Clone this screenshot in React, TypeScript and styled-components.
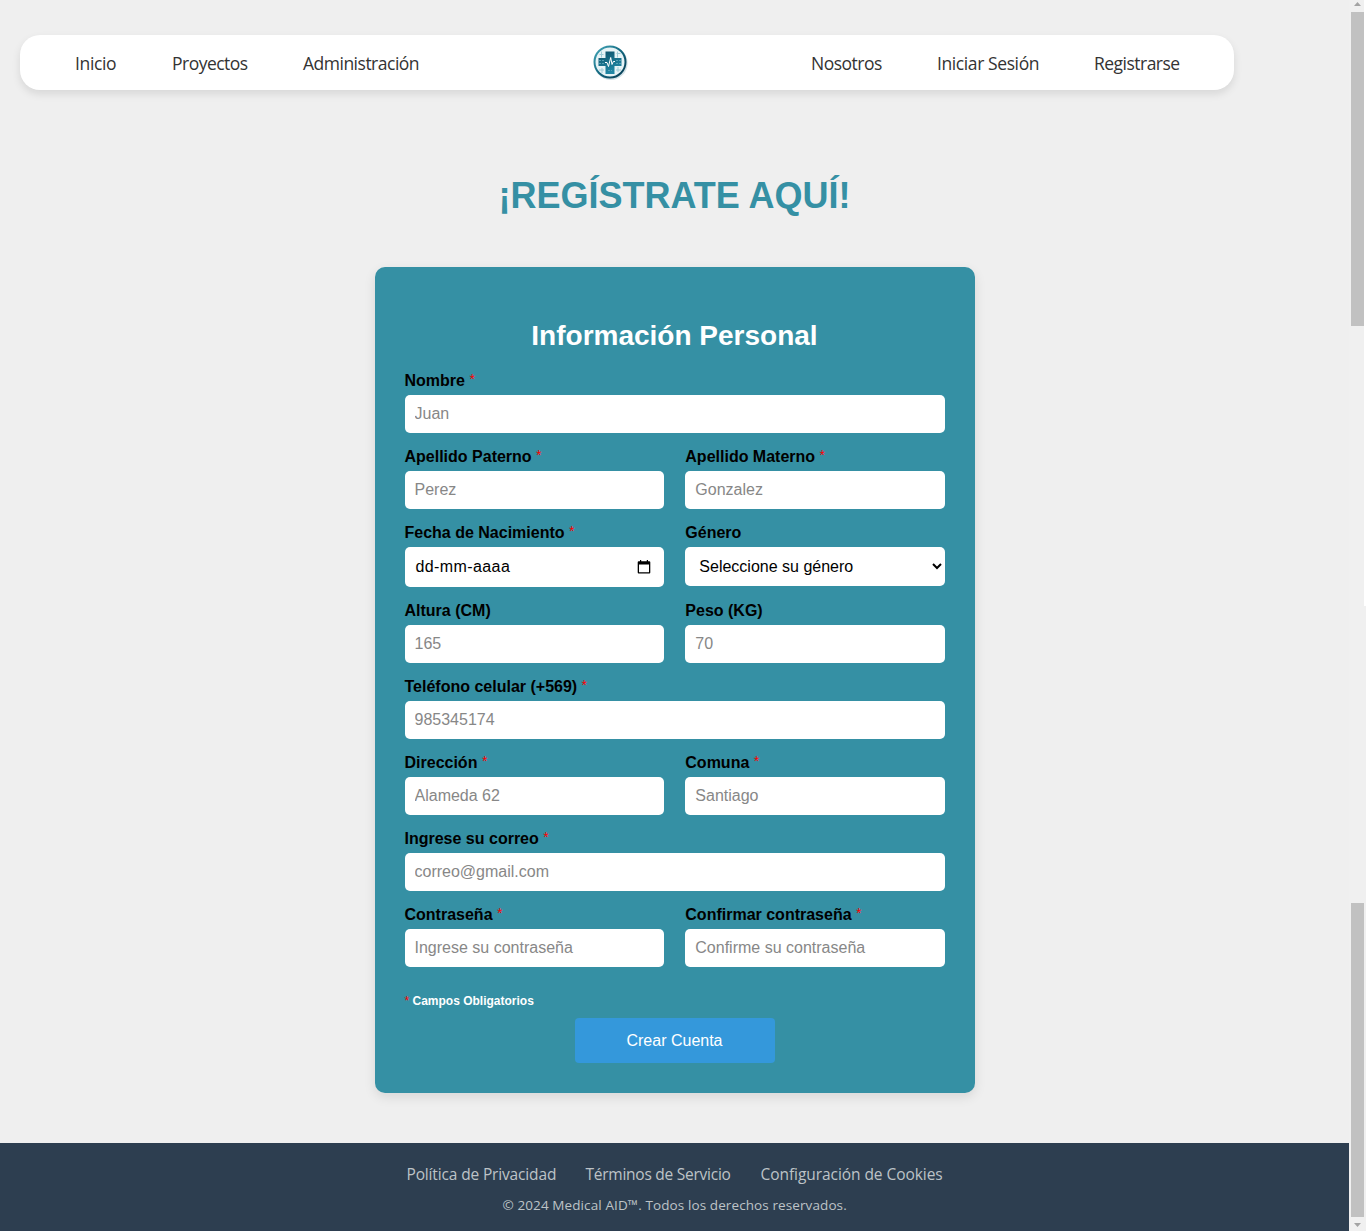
import React from "react";
import styled, { createGlobalStyle } from "styled-components";

const GlobalStyle = createGlobalStyle`
  *, *::before, *::after { box-sizing: border-box; }
  body { margin: 0; background: #efefef; font-family: "Liberation Sans", Arial, sans-serif; }
`;

const Screen = styled.div`
  display: flex;
  width: 1366px;
  height: 1231px;
  overflow: hidden;
`;

const Page = styled.div`
  display: flex;
  flex-direction: column;
  align-items: center;
  width: 1349px;
  height: 1231px;
`;

const NavBar = styled.nav`
  align-self: flex-start;
  display: flex;
  align-items: center;
  justify-content: space-between;
  flex: none;
  width: 1214px;
  height: 55px;
  margin: 35px 0 0 20px;
  padding: 0 55px;
  background: #fff;
  border-radius: 20px;
  box-shadow: 0 4px 8px rgba(0, 0, 0, 0.1);
`;

const NavGroup = styled.div`
  display: flex;
  gap: 55px;
`;

const NavLink = styled.a<{ $width: number; $spacing: number }>`
  width: ${(p) => p.$width}px;
  letter-spacing: ${(p) => p.$spacing}px;
  font: 400 17.5px/26px "Open Sans", "Noto Sans", sans-serif;
  white-space: nowrap;
  color: #333;
`;

const LogoIcon = styled.svg`
  flex: none;
  width: 40px;
  height: 40px;
  margin: -1px 0 0 -10px;
`;

const Title = styled.h1`
  margin: 85px 0 0;
  font-size: 36px;
  line-height: 42px;
  color: #3590a4;
`;

const Card = styled.form`
  display: flex;
  flex-direction: column;
  flex: none;
  width: 600px;
  height: 826px;
  margin-top: 50px;
  padding: 52px 30px 30px;
  border-radius: 10px;
  background: #3590a4;
  box-shadow: 0 4px 12px rgba(0, 0, 0, 0.1);
`;

const CardTitle = styled.h2`
  margin: 0 0 20px;
  font-size: 28px;
  line-height: 33px;
  text-align: center;
  color: #fff;
`;

const Fields = styled.div`
  display: grid;
  grid-template-columns: 48% 48%;
  justify-content: space-between;
  row-gap: 15px;
  align-items: start;
`;

const Field = styled.label<{ $wide?: boolean }>`
  display: flex;
  flex-direction: column;
  gap: 5px;
  grid-column: ${(p) => (p.$wide ? "1 / -1" : "auto")};
`;

const FieldName = styled.span`
  display: block;
  height: 18px;
  font-size: 16px;
  font-weight: 700;
  line-height: 18px;
  white-space: nowrap;
  color: #000;
`;

const Star = styled.span<{ $size?: number }>`
  font-size: ${(p) => p.$size ?? 14}px;
  font-weight: 400;
  line-height: 0;
  vertical-align: ${(p) => (p.$size ? "0" : "2px")};
  color: #f00;
`;

const TextInput = styled.input`
  width: 100%;
  height: 38px;
  padding: 0 10px;
  border: 0;
  border-radius: 5px;
  background: #fff;
  font: 400 16px/18px "Liberation Sans", Arial, sans-serif;
  color: #000;
  &::placeholder { color: #878787; opacity: 1; }
`;

const DateBox = styled.div`
  display: flex;
  align-items: center;
  justify-content: space-between;
  height: 40px;
  padding: 0 13px 0 11px;
  border-radius: 5px;
  background: #fff;
  font-size: 16px;
  color: #000;
`;

const DateText = styled.span`
  letter-spacing: 0.4px;
`;

const SelectBox = styled.select`
  width: 100%;
  height: 39px;
  padding: 0 10px;
  border: 0;
  border-radius: 5px;
  background-color: #fff;
  font: 400 16px "Liberation Sans", Arial, sans-serif;
  color: #000;
`;

const Note = styled.p`
  margin: 27px 0 0;
  font-size: 12px;
  font-weight: 700;
  line-height: 14px;
  color: #fff;
`;

const Submit = styled.button`
  align-self: center;
  width: 200px;
  height: 45px;
  margin-top: 10px;
  border: 0;
  border-radius: 4px;
  background: #3498db;
  font: 400 16px "Liberation Sans", Arial, sans-serif;
  color: #fff;
`;

const Footer = styled.footer`
  display: flex;
  flex-direction: column;
  align-items: center;
  flex: none;
  width: 100%;
  height: 88px;
  margin-top: 50px;
  padding-top: 19px;
  background: #2d3e50;
  color: #bdc3c7;
  font-family: "Open Sans", "Noto Sans", sans-serif;
  white-space: nowrap;
`;

const FooterLinks = styled.div`
  display: flex;
  gap: 30px;
  height: 24px;
`;

const FooterLink = styled.a<{ $width: number; $spacing: number }>`
  width: ${(p) => p.$width}px;
  font-size: 15.5px;
  line-height: 24px;
  letter-spacing: ${(p) => p.$spacing}px;
`;

const Copyright = styled.p`
  margin: 9px 0 0;
  width: 344px;
  font-size: 13.5px;
  line-height: 20px;
  letter-spacing: 0.1px;
`;

const ScrollRail = styled.div`
  display: flex;
  flex-direction: column;
  width: 17px;
  height: 1231px;
  padding-left: 2px;
  background: linear-gradient(#fff, #fff) right top / 2px 606px no-repeat #f0f0f0;
`;

const Arrow = styled.svg`
  flex: none;
  display: block;
  width: 13px;
  height: 12px;
`;

const Thumb = styled.div`
  width: 13px;
  height: 314px;
  background: #c1c1c1;
`;

const RailGap = styled.div`
  height: 577px;
`;

const Logo = () => (
  <LogoIcon viewBox="0 0 40 40">
    <defs>
      <linearGradient id="ring" x1="0" y1="0" x2="1" y2="1">
        <stop offset="0" stopColor="#48aabb" />
        <stop offset="0.5" stopColor="#12677f" />
        <stop offset="1" stopColor="#073850" />
      </linearGradient>
      <linearGradient id="cross" x1="0" y1="0" x2="0.4" y2="1">
        <stop offset="0" stopColor="#0d4e67" />
        <stop offset="0.5" stopColor="#176e88" />
        <stop offset="1" stopColor="#2187a5" />
      </linearGradient>
    </defs>
    <circle cx="20.8" cy="21.2" r="16.8" fill="#b8cfd7" opacity="0.6" />
    <circle cx="20" cy="20" r="15.5" fill="#e6f3f6" stroke="url(#ring)" strokeWidth="2" />
    <path d="M9.5 12.5h4m-2-3v6m15-4h4m-3-2v6M9 28h5m-2-2v5m14-3h5m-3-3v5" stroke="#9ecbd6" strokeWidth="1" />
    <path d="M15.5 9.5h9v6.5h7v8h-7v8h-9v-8h-7v-8h7z" fill="url(#cross)" />
    <path d="M9 18.5h6M9 21.5h5M26 18.5h5M26 21.5h5M18 28.5h4" stroke="#63aabd" strokeWidth="0.8" strokeDasharray="2 1" />
    <path d="M15 20.5h2l1.5 4 2.2-9 1.3 7 1.3-3H25" fill="none" stroke="#fff" strokeWidth="1" />
  </LogoIcon>
);

const CalendarIcon = () => (
  <svg width="14" height="14" viewBox="0 0 14 14">
    <path d="M3 0h1.2v1.2h5.6V0H11v1.2h1.3q1 0 1 1v10.3q0 1-1 1H1.7q-1 0-1-1V2.2q0-1 1-1H3zM2 4.4v7.9h10V4.4z" fill="#000" fillRule="evenodd" />
  </svg>
);

type FieldProps = { name: string; hint: string; required?: boolean; wide?: boolean };

const TextField = ({ name, hint, required, wide }: FieldProps) => (
  <Field $wide={wide}>
    <FieldName>{name}{required && <> <Star>*</Star></>}</FieldName>
    <TextInput placeholder={hint} />
  </Field>
);

export default function App() {
  return (
    <>
      <GlobalStyle />
      <Screen>
        <Page>
          <NavBar>
            <NavGroup>
              <NavLink $width={42} $spacing={-0.35}>Inicio</NavLink>
              <NavLink $width={76} $spacing={-0.52}>Proyectos</NavLink>
              <NavLink $width={116} $spacing={-0.5}>Administración</NavLink>
            </NavGroup>
            <Logo />
            <NavGroup>
              <NavLink $width={71} $spacing={-0.5}>Nosotros</NavLink>
              <NavLink $width={102} $spacing={-0.4}>Iniciar Sesión</NavLink>
              <NavLink $width={85} $spacing={-0.52}>Registrarse</NavLink>
            </NavGroup>
          </NavBar>
          <Title>¡REGÍSTRATE AQUÍ!</Title>
          <Card>
            <CardTitle>Información Personal</CardTitle>
            <Fields>
              <TextField name="Nombre" hint="Juan" required wide />
              <TextField name="Apellido Paterno" hint="Perez" required />
              <TextField name="Apellido Materno" hint="Gonzalez" required />
              <Field as="div">
                <FieldName>Fecha de Nacimiento <Star>*</Star></FieldName>
                <DateBox><DateText>dd-mm-aaaa</DateText><CalendarIcon /></DateBox>
              </Field>
              <Field>
                <FieldName>Género</FieldName>
                <SelectBox><option>Seleccione su género</option></SelectBox>
              </Field>
              <TextField name="Altura (CM)" hint="165" />
              <TextField name="Peso (KG)" hint="70" />
              <TextField name="Teléfono celular (+569)" hint="985345174" required wide />
              <TextField name="Dirección" hint="Alameda 62" required />
              <TextField name="Comuna" hint="Santiago" required />
              <TextField name="Ingrese su correo" hint="correo@gmail.com" required wide />
              <TextField name="Contraseña" hint="Ingrese su contraseña" required />
              <TextField name="Confirmar contraseña" hint="Confirme su contraseña" required />
            </Fields>
            <Note><Star $size={12}>*</Star> Campos Obligatorios</Note>
            <Submit type="button">Crear Cuenta</Submit>
          </Card>
          <Footer>
            <FooterLinks>
              <FooterLink $width={149} $spacing={-0.15}>Política de Privacidad</FooterLink>
              <FooterLink $width={145} $spacing={-0.25}>Términos de Servicio</FooterLink>
              <FooterLink $width={182} $spacing={-0.06}>Configuración de Cookies</FooterLink>
            </FooterLinks>
            <Copyright>© 2024 Medical AID™. Todos los derechos reservados.</Copyright>
          </Footer>
        </Page>
        <ScrollRail>
          <Arrow viewBox="0 0 13 12"><path d="M3 6L6.5 2L10 6z" fill="#a3a3a3" /></Arrow>
          <Thumb />
          <RailGap />
          <Thumb />
          <Arrow viewBox="0 0 13 12"><path d="M3 6L6.5 10L10 6z" fill="#a3a3a3" /></Arrow>
        </ScrollRail>
      </Screen>
    </>
  );
}
